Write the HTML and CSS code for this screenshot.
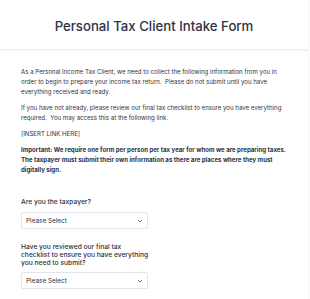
FILE: index.html
```html
<!DOCTYPE html>
<html>
<head>
<meta charset="utf-8">
<link rel="stylesheet" href="styles.css">
</head>
<body>
<div class="form">
  <div class="header">
    <h1 class="title">Personal Tax Client Intake Form</h1>
  </div>
  <div class="content">
    <p class="para">As a Personal Income Tax Client, we need to collect the following information from you in order to begin to prepare your income tax return.&nbsp; Please do not submit until you have everything received and ready.</p>
    <p class="para">If you have not already, please review our final tax checklist to ensure you have everything required.&nbsp; You may access this at the following link.</p>
    <p class="para">[INSERT LINK HERE]</p>
    <p class="para important">Important: We require one form per person per tax year for whom we are preparing taxes.  The taxpayer must submit their own information as there are places where they must digitally sign.</p>

    <div class="field first">
      <div class="label">Are you the taxpayer?</div>
      <div class="select"><span>Please Select</span>
        <svg class="chev" width="6" height="4" viewBox="0 0 6 4"><path d="M1 1 L3 3 L5 1" fill="none" stroke="#57647e" stroke-width="0.8"/></svg>
      </div>
    </div>

    <div class="field">
      <div class="label narrow">Have you reviewed our final tax checklist to ensure you have everything you need to submit?</div>
      <div class="select"><span>Please Select</span>
        <svg class="chev" width="6" height="4" viewBox="0 0 6 4"><path d="M1 1 L3 3 L5 1" fill="none" stroke="#57647e" stroke-width="0.8"/></svg>
      </div>
    </div>
  </div>
</div>
</body>
</html>
```

FILE: styles.css
```css
html, body {
  margin: 0;
  padding: 0;
  background: #ffffff;
}
body {
  font-family: Inter, "Noto Sans", sans-serif;
  color: #2c3345;
}
.form {
  width: 309px;
  height: 299px;
  border-right: 1px solid #f3f3f5;
  box-sizing: border-box;
  overflow: hidden;
}
.header {
  height: 51px;
  border-bottom: 2px solid #f3f3f5;
  display: flex;
  align-items: center;
  justify-content: center;
  box-sizing: border-box;
  padding-top: 2px;
}
.title {
  margin: 0;
  font-size: 13.2px;
  font-weight: 500;
  color: #2c3345;
}
.content {
  padding: 16px 21px 0 21px;
}
.para {
  margin: 0 0 6px 0;
  font-size: 6.1px;
  line-height: 10px;
  color: #2c3345;
}
.important {
  font-weight: 700;
}
.field {
  margin-top: 14px;
}
.field.first {
  margin-top: 23px;
}
.label {
  font-size: 6.7px;
  line-height: 8px;
  font-weight: 500;
  color: #2c3345;
  margin-bottom: 6px;
}
.label.narrow {
  width: 130px;
  margin-bottom: 5px;
}
.select {
  width: 127px;
  height: 17px;
  box-sizing: border-box;
  border: 1px solid #e3e5ea;
  border-radius: 2px;
  display: flex;
  align-items: center;
  justify-content: space-between;
  padding: 0 4px 0 4px;
  font-size: 6.4px;
  color: #2c3345;
}
.chev {
  display: block;
}
```
